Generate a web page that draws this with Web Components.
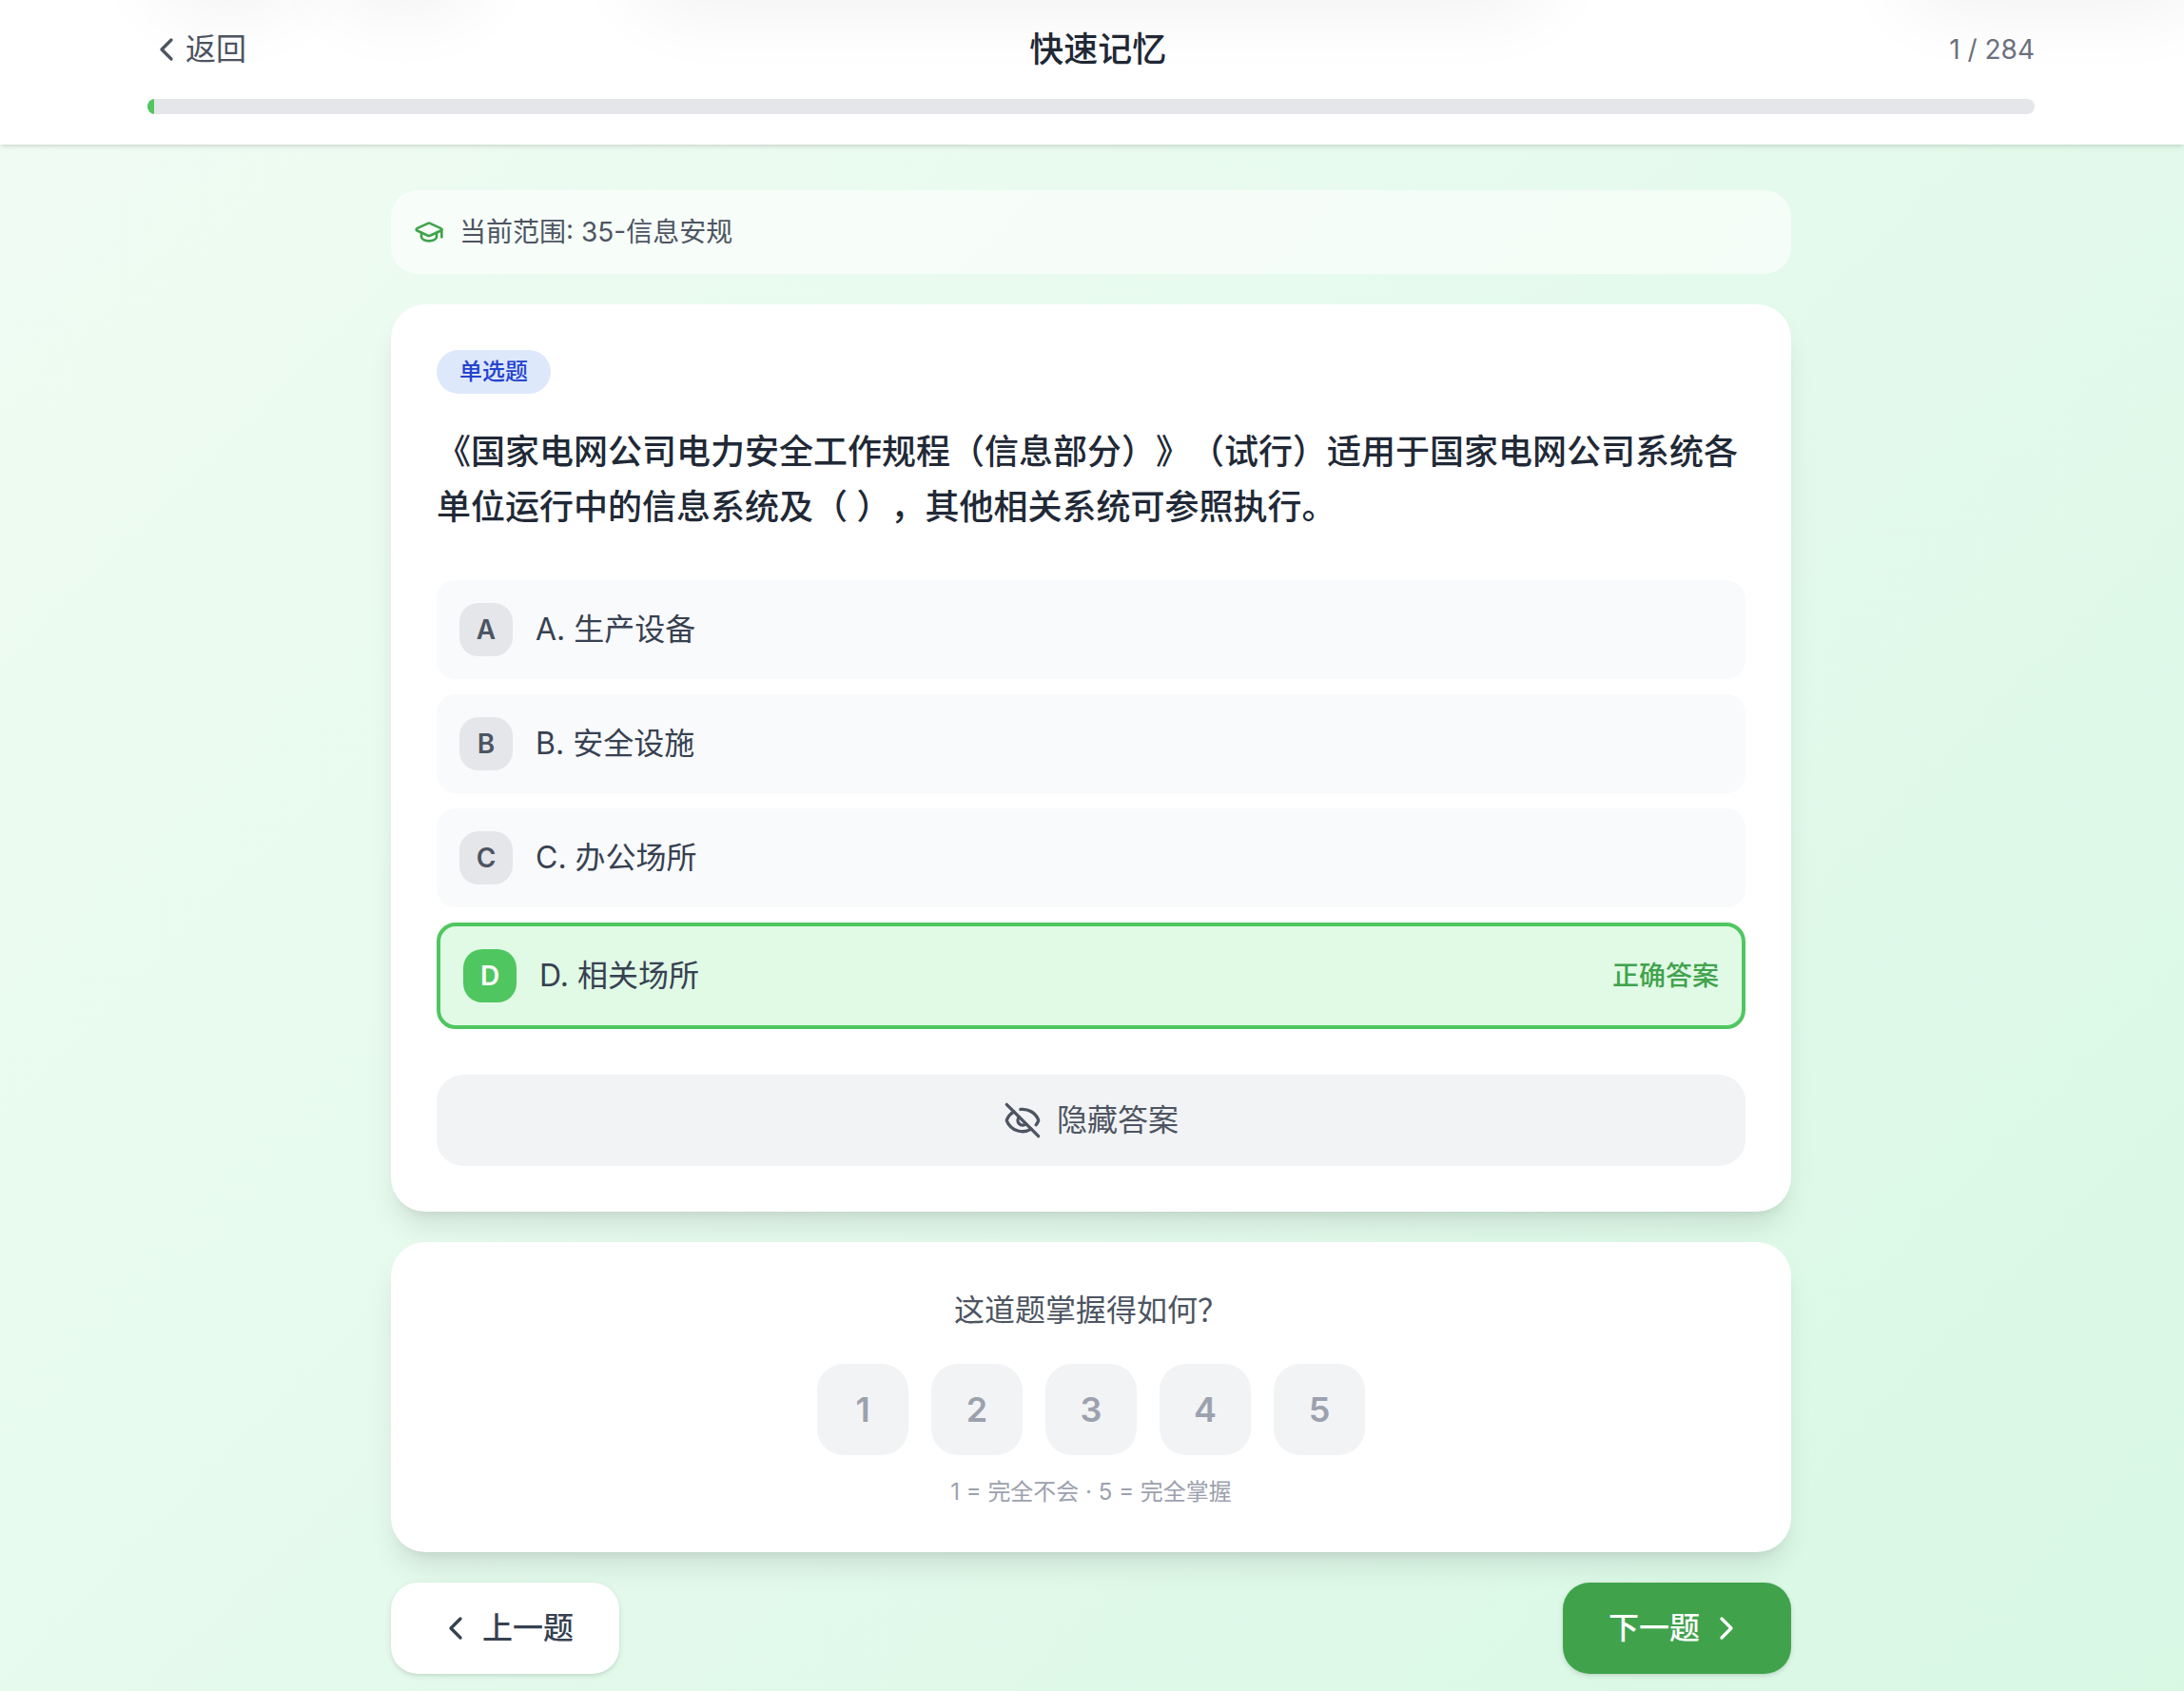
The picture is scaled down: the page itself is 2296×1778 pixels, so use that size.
<!DOCTYPE html>
<html lang="zh-CN">
<head>
<meta charset="utf-8">
<meta name="viewport" content="width=device-width, initial-scale=1">
<title>快速记忆</title>
<style>
  html, body { margin: 0; }
  body {
    font-family: Inter, "Noto Sans CJK SC", sans-serif;
    font-size: 32px;
    line-height: 48px;
    color: #374151;
    text-spacing-trim: space-all;
    --green: #50c660;
    --green-dark: #40a34c;
    --green-soft: #e0fae6;
    --gray-50: #f9fafc;
    --gray-100: #f2f3f5;
    --gray-200: #e5e6ea;
    --gray-400: #9ca1ae;
    --gray-500: #6c717f;
    --gray-600: #4d5562;
    --gray-800: #212936;
    --radius-s: 20px;
    --radius-m: 28px;
    --radius-l: 36px;
    --lift: 0 20px 30px -6px rgba(0,0,0,.1), 0 8px 12px -8px rgba(0,0,0,.1);
    --edge: 0 2px 6px rgba(0,0,0,.1), 0 2px 4px -2px rgba(0,0,0,.1);
  }
</style>
</head>
<body>
<memory-app></memory-app>

<script>
const ICONS = {
  left: '<path d="m15 18-6-6 6-6"/>',
  right: '<path d="m9 18 6-6-6-6"/>',
  cap: '<path d="M21.42 10.922a1 1 0 0 0-.019-1.838L12.83 5.18a2 2 0 0 0-1.66 0L2.6 9.08a1 1 0 0 0 0 1.832l8.57 3.908a2 2 0 0 0 1.66 0z"/><path d="M22 10v6"/><path d="M6 12.5V16a6 3 0 0 0 12 0v-3.5"/>',
  eyeOff: '<path d="M10.733 5.076a10.744 10.744 0 0 1 11.205 6.575 1 1 0 0 1 0 .696 10.747 10.747 0 0 1-1.444 2.49"/><path d="M14.084 14.158a3 3 0 0 1-4.242-4.242"/><path d="M17.479 17.499a10.75 10.75 0 0 1-15.417-5.151 1 1 0 0 1 0-.696 10.75 10.75 0 0 1 4.446-5.143"/><path d="m2 2 20 20"/>'
};

class BaseElement extends HTMLElement {
  connectedCallback() {
    if (this.shadowRoot) return;
    this.attachShadow({ mode: 'open' }).innerHTML =
      `<style>
        * { box-sizing: border-box; }
        button { font: inherit; color: inherit; border: 0; margin: 0; padding: 0; background: none; cursor: pointer; }
        ${this.styles()}
      </style>${this.view()}`;
  }
}

customElements.define('line-icon', class extends BaseElement {
  styles() { return `
    :host { display: block; flex: none; width: 40px; height: 40px; }
    :host([size="small"]) { width: 32px; height: 32px; }
    svg { display: block; width: 100%; height: 100%; }`; }
  view() { return `<svg viewBox="0 0 24 24" fill="none" stroke="currentColor" stroke-width="2" stroke-linecap="round" stroke-linejoin="round" aria-hidden="true">${ICONS[this.getAttribute('name')]}</svg>`; }
});

customElements.define('progress-bar', class extends BaseElement {
  styles() {
    const share = this.getAttribute('value') / this.getAttribute('max') * 100;
    return `
    :host { display: block; height: 16px; border-radius: 8px; background: var(--gray-200); overflow: hidden; }
    div { height: 100%; width: ${share}%; background: var(--green); }`; }
  view() { return `<div></div>`; }
});

customElements.define('page-header', class extends BaseElement {
  styles() { return `
    :host { display: block; position: relative; background: #fff; box-shadow: var(--edge); padding: 24px 2px 32px 0; }
    .inner { max-width: 2048px; margin: 0 auto; padding: 0 32px; box-sizing: border-box; display: flex; flex-direction: column; gap: 24px; }
    .row { display: flex; align-items: center; justify-content: space-between; height: 56px; }
    button { display: flex; align-items: center; color: var(--gray-600); }
    h1 { margin: 0; font-size: 36px; line-height: 56px; font-weight: 500; color: var(--gray-800); }
    .count { font-size: 28px; line-height: 40px; color: var(--gray-500); }
    .haze { position: absolute; inset: 0; overflow: hidden; pointer-events: none; }
    .haze i { position: absolute; bottom: 100%; height: 96px; border-radius: 48px; box-shadow: 0 10px 80px rgba(0,0,0,.06); }
    .haze i:nth-child(1) { left: 7%; width: 7%; }
    .haze i:nth-child(2) { left: 15%; width: 7%; }
    .haze i:nth-child(3) { left: 29%; width: 42%; }
    .haze i:nth-child(4) { left: 87%; width: 14%; }`; }
  view() { return `
    <div class="haze" aria-hidden="true"><i></i><i></i><i></i><i></i></div>
    <div class="inner">
      <div class="row">
        <button type="button"><line-icon name="left"></line-icon><span>返回</span></button>
        <h1><slot></slot></h1>
        <span class="count">1 / 284</span>
      </div>
      <progress-bar value="1" max="284" role="progressbar" aria-valuenow="1" aria-valuemax="284" aria-label="进度"></progress-bar>
    </div>`; }
});

customElements.define('range-banner', class extends BaseElement {
  styles() { return `
    :host { display: flex; align-items: center; gap: 16px; padding: 24px; border-radius: var(--radius-m); background: rgba(255,255,255,.6); font-size: 28px; line-height: 40px; color: var(--gray-600); }
    line-icon { color: var(--green-dark); }`; }
  view() { return `<line-icon name="cap" size="small"></line-icon><span><slot></slot></span>`; }
});

customElements.define('surface-card', class extends BaseElement {
  styles() { return `
    :host { display: flex; flex-direction: column; padding: 48px; border-radius: var(--radius-l); background: #fff; box-shadow: var(--lift); }`; }
  view() { return `<slot></slot>`; }
});

customElements.define('type-badge', class extends BaseElement {
  styles() { return `
    :host { display: block; align-self: flex-start; padding: 0 24px; border-radius: 24px; background: #dde8fb; color: #2643cf; font-size: 24px; line-height: 46px; font-weight: 500; }`; }
  view() { return `<slot></slot>`; }
});

customElements.define('answer-option', class extends BaseElement {
  styles() { return `
    :host { display: flex; align-items: center; gap: 24px; padding: 24px; border-radius: var(--radius-s); background: var(--gray-50); }
    :host([correct]) { border: 4px solid var(--green); background: var(--green-soft); }
    .key { flex: none; display: grid; place-items: center; width: 56px; height: 56px; border-radius: var(--radius-s); background: var(--gray-200); color: var(--gray-600); font-size: 28px; line-height: 40px; font-weight: 600; }
    :host([correct]) .key { background: var(--green); color: #fff; }
    .text { flex: 1; }
    .mark { font-size: 28px; line-height: 40px; font-weight: 500; color: var(--green-dark); }`; }
  view() { return `
    <span class="key">${this.getAttribute('key')}</span>
    <span class="text"><slot></slot></span>
    ${this.hasAttribute('correct') ? '<span class="mark">正确答案</span>' : ''}`; }
});

customElements.define('question-card', class extends BaseElement {
  styles() { return `
    :host { display: block; }
    h2 { margin: 32px 0 48px; font-size: 36px; line-height: 58px; font-weight: 500; color: var(--gray-800); }
    .options { display: flex; flex-direction: column; gap: 16px; margin-bottom: 48px; }
    button { display: flex; align-items: center; justify-content: center; gap: 16px; height: 96px; border-radius: var(--radius-m); background: var(--gray-100); color: var(--gray-600); }`; }
  view() { return `
    <surface-card>
      <type-badge>单选题</type-badge>
      <h2>《国家电网公司电力安全工作规程（信息部分）》（试行）适用于国家电网公司系统各单位运行中的信息系统及（ ），其他相关系统可参照执行。</h2>
      <div class="options">
        <answer-option key="A">A. 生产设备</answer-option>
        <answer-option key="B">B. 安全设施</answer-option>
        <answer-option key="C">C. 办公场所</answer-option>
        <answer-option key="D" correct>D. 相关场所</answer-option>
      </div>
      <button type="button"><line-icon name="eyeOff"></line-icon><span>隐藏答案</span></button>
    </surface-card>`; }
});

customElements.define('rating-card', class extends BaseElement {
  styles() { return `
    :host { display: block; text-align: center; }
    p { margin: 0; }
    .ask { color: var(--gray-600); }
    .scale { display: flex; justify-content: center; gap: 24px; margin: 32px 0 24px; }
    .scale button { width: 96px; height: 96px; border-radius: var(--radius-m); background: var(--gray-100); color: var(--gray-400); font-size: 36px; font-weight: 600; }
    .hint { font-size: 24px; line-height: 30px; color: var(--gray-400); }`; }
  view() { return `
    <surface-card>
      <p class="ask">这道题掌握得如何？</p>
      <div class="scale">${[1, 2, 3, 4, 5].map(n => `<button type="button">${n}</button>`).join('')}</div>
      <p class="hint">1 = 完全不会 · 5 = 完全掌握</p>
    </surface-card>`; }
});

customElements.define('step-nav', class extends BaseElement {
  styles() { return `
    :host { display: flex; justify-content: space-between; }
    button { display: flex; align-items: center; gap: 8px; height: 96px; padding: 0 48px; border-radius: var(--radius-m); background: #fff; font-weight: 500; box-shadow: var(--edge); }
    .next { background: var(--green-dark); color: #fff; }`; }
  view() { return `
    <button type="button"><line-icon name="left"></line-icon><span>上一题</span></button>
    <button type="button" class="next"><span>下一题</span><line-icon name="right"></line-icon></button>`; }
});

customElements.define('memory-app', class extends BaseElement {
  styles() { return `
    :host { display: block; min-height: 100vh; background: linear-gradient(135deg, #f1fcf4, #d8f8e4); }
    main { padding: 48px 2px 16px 0; }
    .column { max-width: 1536px; margin: 0 auto; padding: 0 32px; display: flex; flex-direction: column; gap: 32px; }`; }
  view() { return `
    <page-header>快速记忆</page-header>
    <main><div class="column">
      <range-banner>当前范围: 35-信息安规</range-banner>
      <question-card></question-card>
      <rating-card></rating-card>
      <step-nav></step-nav>
    </div></main>`; }
});
</script>
</body>
</html>
